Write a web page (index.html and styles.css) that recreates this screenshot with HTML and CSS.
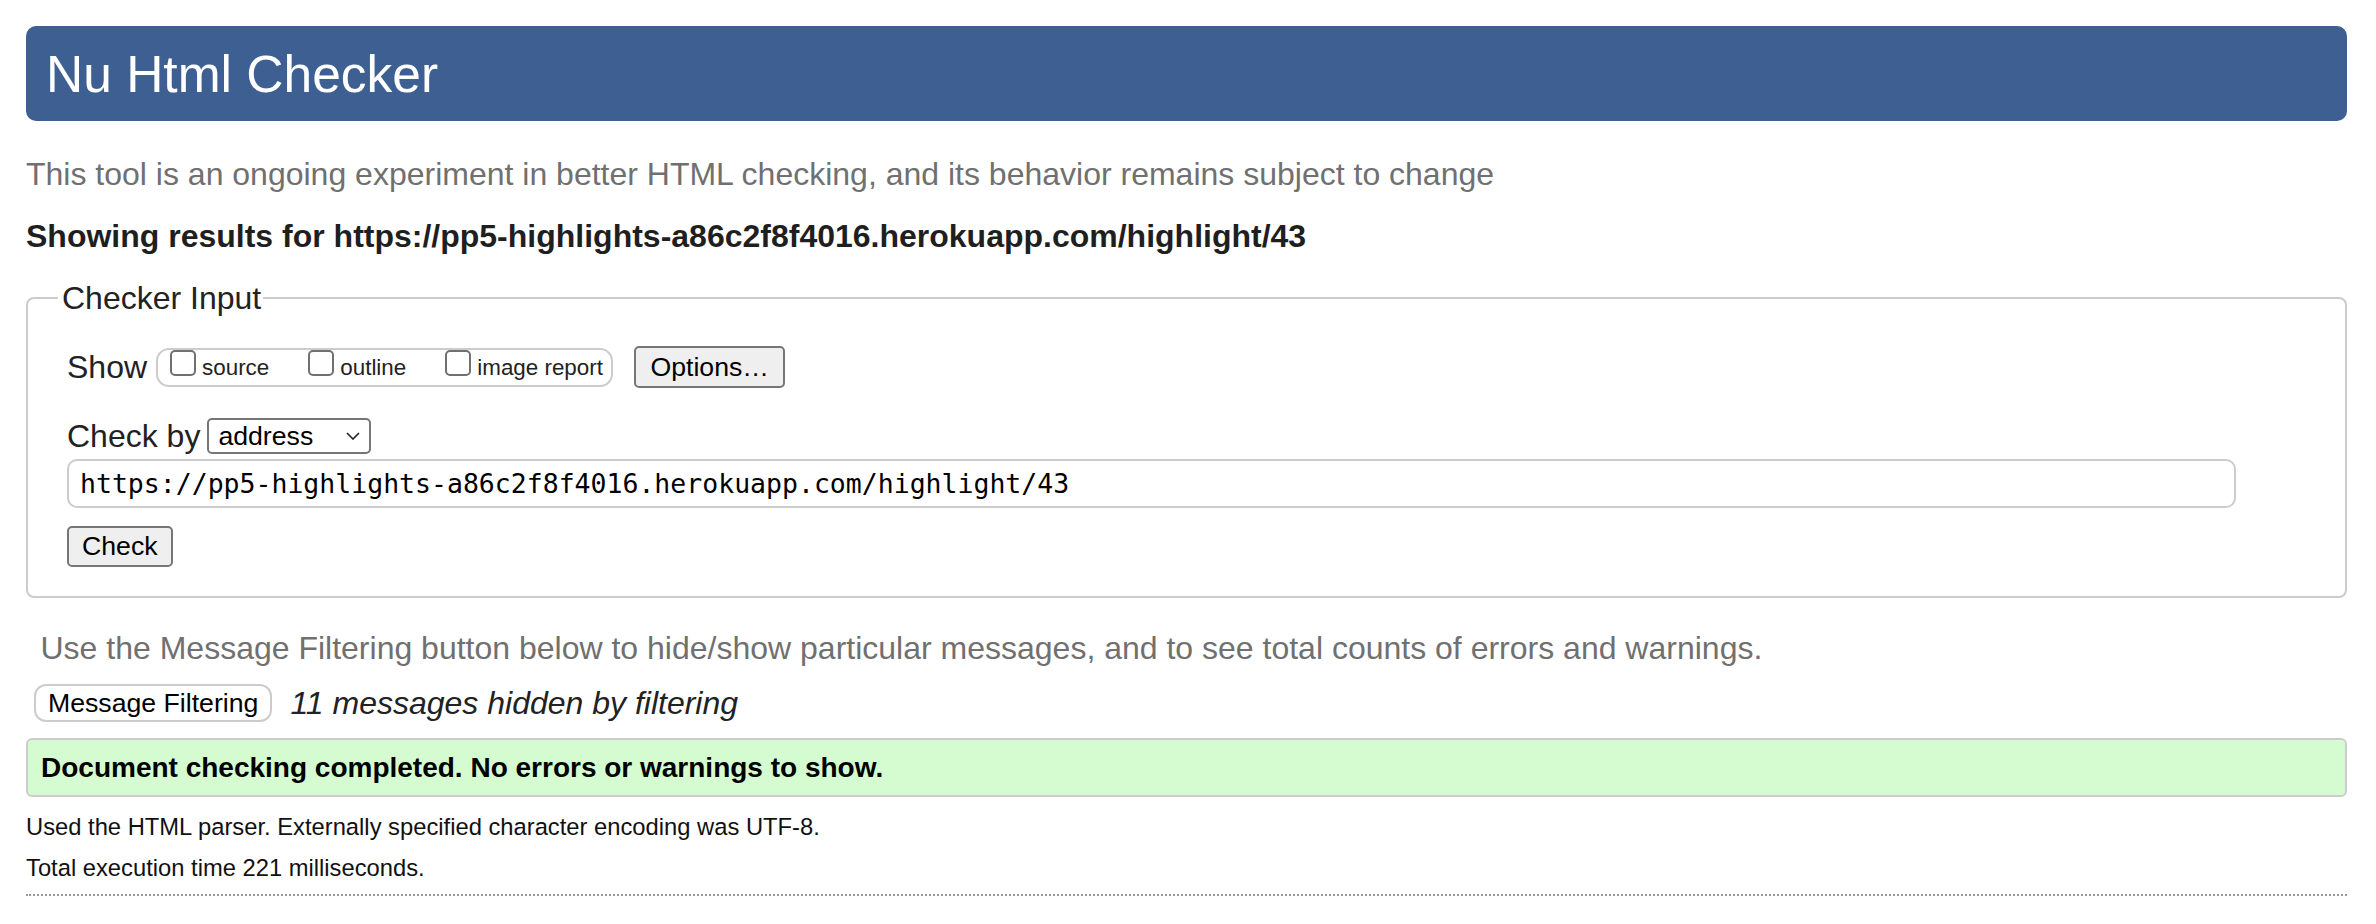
FILE: index.html
```html
<!DOCTYPE html>
<html lang="en">
<head>
<meta charset="utf-8">
<title>Nu Html Checker</title>
<link rel="stylesheet" href="styles.css">
</head>
<body>
<h1 class="title">Nu Html Checker</h1>
<p class="intro">This tool is an ongoing experiment in better HTML checking, and its behavior remains subject to change</p>
<p class="showing">Showing results for https://pp5-highlights-a86c2f8f4016.herokuapp.com/highlight/43</p>
<fieldset class="checker">
  <legend>Checker Input</legend>
  <div class="row show-row">
    <span class="lbl">Show</span>
    <span class="group">
      <label><span class="cb"></span><span class="opt">source</span></label>
      <label><span class="cb"></span><span class="opt">outline</span></label>
      <label><span class="cb"></span><span class="opt">image report</span></label>
    </span>
    <span class="btn options">Options…</span>
  </div>
  <div class="row by-row">
    <span class="lbl">Check by</span>
    <span class="select">address<svg class="chev" width="14" height="8" viewBox="0 0 14 8"><path d="M1 1 L7 7 L13 1" fill="none" stroke="#222" stroke-width="1.6"/></svg></span>
  </div>
  <div class="url">https://pp5-highlights-a86c2f8f4016.herokuapp.com/highlight/43</div>
  <span class="btn check">Check</span>
</fieldset>
<p class="hint">Use the Message Filtering button below to hide/show particular messages, and to see total counts of errors and warnings.</p>
<div class="filter-row">
  <span class="pill">Message Filtering</span>
  <em class="hidden-count">11 messages hidden by filtering</em>
</div>
<div class="success">Document checking completed. No errors or warnings to show.</div>
<p class="small first">Used the HTML parser. Externally specified character encoding was UTF-8.</p>
<p class="small">Total execution time 221 milliseconds.</p>
<div class="rule"></div>
</body>
</html>
```
FILE: styles.css
```css
* { box-sizing: border-box; }
html, body { margin: 0; background: #fff; }
body {
  font-family: "Liberation Sans", Arial, Helvetica, sans-serif;
  font-size: 32px;
  color: #222;
  padding: 26px 29px 0 26px;
}
.title {
  margin: 0;
  height: 95px;
  display: flex;
  align-items: center;
  padding-left: 20px;
  background: #3e5f92;
  color: #fff;
  font-size: 51.5px;
  font-weight: normal;
  border-radius: 10px;
}
.intro {
  margin: 33px 0 0;
  line-height: 40px;
  color: #707070;
}
.showing {
  margin: 22px 0 0;
  line-height: 40px;
  font-weight: bold;
  color: #1f1f1f;
}
.checker {
  margin: 22px 0 0;
  border: 2px solid #cccccc;
  border-radius: 8px;
  padding: 28px 0 29px 39px;
  min-width: 0;
}
.checker legend {
  font-size: 32px;
  line-height: 40px;
  padding: 0 2px 0 4px;
  margin-left: -9px;
  color: #222;
}
.row {
  display: flex;
  align-items: center;
}
.lbl { line-height: 40px; white-space: nowrap; }
.show-row { height: 42px; }
.group {
  display: flex;
  align-items: stretch;
  height: 39px;
  margin-left: 9px;
  border: 2px solid #cccccc;
  border-radius: 13px;
  padding: 0 8px 0 12px;
  font-size: 22.4px;
}
.group label {
  display: flex;
  align-items: flex-start;
}
.group label + label { margin-left: 39px; }
.cb {
  width: 26px;
  height: 26px;
  border: 2px solid #707070;
  border-radius: 5px;
  background: #fff;
  margin-right: 6px;
}
.opt {
  line-height: 26px;
  margin-top: 5px;
}
.btn {
  display: inline-flex;
  align-items: center;
  padding: 0 13px;
  font-size: 26.67px;
  color: #000;
  background: #efefef;
  border: 2px solid #767676;
  border-radius: 5px;
}
.options { height: 42px; margin-left: 21px; padding: 0 14.5px; }
.by-row { height: 36px; margin-top: 30px; }
.select {
  display: flex;
  align-items: center;
  justify-content: space-between;
  width: 164px;
  height: 36px;
  margin-left: 7px;
  padding: 0 9px 0 9px;
  border: 2px solid #767676;
  border-radius: 5px;
  font-size: 26.67px;
  color: #000;
  background: #fff;
}
.url {
  display: flex;
  align-items: center;
  width: 2169px;
  height: 49px;
  margin-top: 5px;
  padding-left: 11px;
  border: 2px solid #cccccc;
  border-radius: 10px;
  font-family: "DejaVu Sans Mono", "Liberation Mono", monospace;
  font-size: 26.5px;
  color: #000;
}
.check { height: 41px; margin-top: 18px; }
.hint {
  margin: 30px 0 0 14.5px;
  line-height: 40px;
  color: #707070;
}
.filter-row {
  display: flex;
  align-items: center;
  height: 38px;
  margin: 16px 0 0 8px;
}
.pill {
  display: inline-flex;
  align-items: center;
  height: 38px;
  padding: 0 12px;
  border: 2px solid #cccccc;
  border-radius: 12px;
  background: #fff;
  font-size: 26.67px;
  color: #000;
}
.hidden-count {
  margin-left: 18px;
  font-style: italic;
  color: #222;
}
.success {
  display: flex;
  align-items: center;
  height: 59px;
  margin-top: 16px;
  padding-left: 13px;
  border: 2px solid #cccccc;
  border-radius: 6px;
  background: #d5fcd0;
  font-weight: bold;
  font-size: 28px;
  color: #000;
}
.small {
  font-size: 23.75px;
  line-height: 30px;
  margin: 11px 0 0;
  color: #111;
}
.small.first { margin-top: 15px; }
.rule {
  margin-top: 11px;
  border-top: 2px dotted #999;
}
```
